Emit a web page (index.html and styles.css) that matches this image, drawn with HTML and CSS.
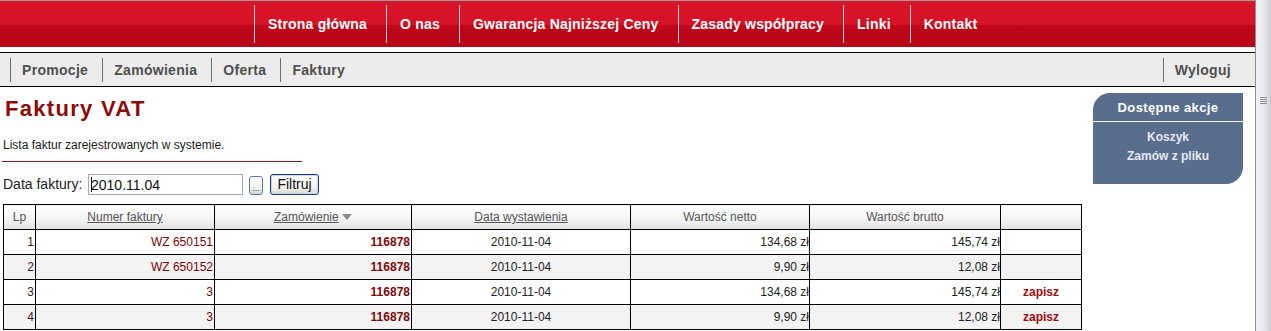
FILE: index.html
```html
<!DOCTYPE html>
<html lang="pl">
<head>
<meta charset="utf-8">
<title>Faktury VAT</title>
<link rel="stylesheet" href="styles.css">
</head>
<body>
<div class="window">
  <div class="page">
    <header class="topbar">
      <nav class="mainnav">
        <a href="#">Strona główna</a>
        <a href="#">O nas</a>
        <a href="#">Gwarancja Najniższej Ceny</a>
        <a href="#">Zasady współpracy</a>
        <a href="#">Linki</a>
        <a href="#">Kontakt</a>
      </nav>
    </header>
    <nav class="subnav">
      <a href="#">Promocje</a>
      <a href="#">Zamówienia</a>
      <a href="#">Oferta</a>
      <a href="#">Faktury</a>
      <a href="#" class="logout">Wyloguj</a>
    </nav>
    <div class="main">
      <section class="content">
        <h1 class="title">Faktury VAT</h1>
        <p class="lead">Lista faktur zarejestrowanych w systemie.</p>
        <hr class="divider">
        <form class="filter">
          <label class="filter-label">Data faktury:</label>
          <span class="date-input"><span class="caret"></span>2010.11.04</span>
          <button type="button" class="pick-btn">...</button>
          <button type="button" class="xp-btn">Filtruj</button>
        </form>
        <table class="grid">
          <colgroup>
            <col class="c-lp"><col class="c-num"><col class="c-ord"><col class="c-date"><col class="c-net"><col class="c-gross"><col class="c-act">
          </colgroup>
          <thead>
            <tr>
              <th>Lp</th>
              <th><a href="#">Numer faktury</a></th>
              <th><a href="#">Zamówienie</a> <svg class="sort" width="10" height="6" viewBox="0 0 10 6"><path d="M0 0H10L5 6Z" fill="#8a8a8a"/></svg></th>
              <th><a href="#">Data wystawienia</a></th>
              <th>Wartość netto</th>
              <th>Wartość brutto</th>
              <th></th>
            </tr>
          </thead>
          <tbody>
            <tr>
              <td class="r lp">1</td><td class="r num">WZ 650151</td><td class="r ord">116878</td><td class="c">2010-11-04</td><td class="r money">134,68 zł</td><td class="r money">145,74 zł</td><td class="c"></td>
            </tr>
            <tr class="alt">
              <td class="r lp">2</td><td class="r num">WZ 650152</td><td class="r ord">116878</td><td class="c">2010-11-04</td><td class="r money">9,90 zł</td><td class="r money">12,08 zł</td><td class="c"></td>
            </tr>
            <tr>
              <td class="r lp">3</td><td class="r num">3</td><td class="r ord">116878</td><td class="c">2010-11-04</td><td class="r money">134,68 zł</td><td class="r money">145,74 zł</td><td class="c"><a href="#" class="save">zapisz</a></td>
            </tr>
            <tr class="alt">
              <td class="r lp">4</td><td class="r num">3</td><td class="r ord">116878</td><td class="c">2010-11-04</td><td class="r money">9,90 zł</td><td class="r money">12,08 zł</td><td class="c"><a href="#" class="save">zapisz</a></td>
            </tr>
          </tbody>
        </table>
      </section>
      <aside class="actions">
        <div class="actions-head">Dostępne akcje</div>
        <div class="actions-body">
          <a href="#">Koszyk</a>
          <a href="#">Zamów z pliku</a>
        </div>
      </aside>
    </div>
  </div>
  <div class="scrollbar"><div class="grip"></div></div>
</div>
</body>
</html>
```
FILE: styles.css
```css
html, body {
  margin: 0;
  padding: 0;
  height: 100%;
  overflow: hidden;
  background: #fff;
  font-family: "Liberation Sans", Arial, sans-serif;
}

.window {
  display: flex;
  height: 100%;
}

.page {
  width: 1255px;
  flex: none;
}

/* ---- top red bar ---- */
.topbar {
  height: 46px;
  border-top: 1px solid #9c9c9c;
  background: linear-gradient(#da1429 0, #d51227 52%, #bf0619 53%, #b90518 100%);
  margin-bottom: 5px;
}

.mainnav {
  display: flex;
  padding-left: 254px;
  padding-top: 4px;
}

.mainnav a {
  height: 38px;
  line-height: 38px;
  border-left: 1px solid #f4d6d9;
  padding: 0 19px 0 13px;
  color: #fff;
  font-weight: bold;
  font-size: 14px;
  letter-spacing: 0.2px;
  text-decoration: none;
}

.mainnav a:last-child {
  padding-right: 0;
}

/* ---- secondary bar ---- */
.subnav {
  display: flex;
  height: 33px;
  border-top: 1px solid #000;
  border-bottom: 1px solid #000;
  background: #ececec;
  padding-left: 10px;
  align-items: center;
}

.subnav a {
  height: 24px;
  line-height: 24px;
  border-left: 1px solid #6e6e6e;
  padding: 0 14px 0 11px;
  color: #505050;
  font-weight: bold;
  font-size: 14px;
  letter-spacing: 0.3px;
  text-decoration: none;
}

.subnav a.logout {
  margin-left: auto;
  padding: 0 24px 0 11px;
}

/* ---- main area ---- */
.main {
  display: flex;
  align-items: flex-start;
}

.content {
  width: 1078px;
  padding-left: 3px;
  flex: none;
}

.title {
  margin: 9px 0 0 2px;
  font-size: 22px;
  line-height: 26px;
  letter-spacing: 1.3px;
  color: #8c0b0b;
  font-weight: bold;
}

.lead {
  margin: 16px 0 0 0;
  font-size: 12px;
  line-height: 15px;
  color: #1a1a1a;
}

.divider {
  width: 300px;
  margin: 8px 0 0 -1px;
  border: 0;
  border-top: 1px solid #8b1a1a;
  height: 0;
}

.filter {
  display: flex;
  align-items: center;
  height: 22px;
  margin-top: 11px;
}

.filter-label {
  font-size: 14px;
  color: #222;
  width: 85px;
}

.date-input {
  box-sizing: border-box;
  width: 155px;
  height: 21px;
  margin-top: 1px;
  border: 1px solid #a3a8ad;
  display: flex;
  align-items: center;
  padding-left: 2px;
  font-size: 14px;
  color: #111;
  background: #fff;
}

.caret {
  width: 1px;
  height: 15px;
  background: #000;
  margin-right: -1px;
}

.pick-btn {
  box-sizing: border-box;
  width: 14px;
  height: 19px;
  margin: 3px 0 0 6px;
  padding: 0;
  border: 1px solid #5b7ba6;
  border-radius: 3px;
  background: linear-gradient(#ffffff, #f1f0ec 60%, #d9d6cc);
  font-family: "Liberation Sans", Arial, sans-serif;
  font-size: 9px;
  line-height: 22px;
  color: #24427c;
  overflow: hidden;
}

.xp-btn {
  box-sizing: border-box;
  width: 49px;
  height: 21px;
  margin: 0 0 0 7px;
  padding: 0;
  border: 1px solid #1d3f79;
  border-radius: 3px;
  background: linear-gradient(#fefefe, #f3f2ec 65%, #dcd8cb);
  box-shadow: inset 0 0 0 1px #c7d8f3;
  font-family: "Liberation Sans", Arial, sans-serif;
  font-size: 14px;
  line-height: 17px;
  color: #111;
}

/* ---- table ---- */
.grid {
  margin-top: 9px;
  border-collapse: collapse;
  table-layout: fixed;
  width: 1078px;
  font-size: 12px;
  color: #222;
}

.c-lp { width: 32px; }
.c-num { width: 179px; }
.c-ord { width: 197px; }
.c-date { width: 219px; }
.c-net { width: 179px; }
.c-gross { width: 191px; }
.c-act { width: 81px; }

.grid th,
.grid td {
  border: 1px solid #000;
  height: 24px;
  padding: 0 1px;
  white-space: nowrap;
  overflow: hidden;
}

.grid th {
  background: linear-gradient(#ffffff, #f4f4f4 55%, #e3e3e3);
  font-weight: normal;
  color: #555;
  text-align: center;
}

.grid th a {
  color: #555;
  text-decoration: underline;
}

.sort {
  vertical-align: 1px;
}

.grid tr.alt td {
  background: #f3f3f3;
}

.grid td.r { text-align: right; }
.grid td.c { text-align: center; }

.grid td.lp {
  color: #3a1a1a;
}

.grid td.num {
  color: #780606;
}

.grid td.ord {
  color: #7d0a0a;
  font-weight: bold;
}

.grid td.money {
  padding-right: 0;
}

.save {
  color: #a00d0d;
  font-weight: bold;
  text-decoration: none;
}

/* ---- side panel ---- */
.actions {
  width: 150px;
  margin: 6px 0 0 12px;
  background: #596d8d;
  border-radius: 17px 0 17px 0;
  overflow: hidden;
  flex: none;
}

.actions-head {
  height: 28px;
  line-height: 29px;
  border-bottom: 1px solid #f2f4f8;
  text-align: center;
  color: #fff;
  font-size: 13px;
  font-weight: bold;
  letter-spacing: 0.4px;
}

.actions-body {
  height: 62px;
  box-sizing: border-box;
  padding-top: 6px;
  display: flex;
  flex-direction: column;
  align-items: center;
}

.actions-body a {
  color: #e6e9f1;
  font-size: 12px;
  font-weight: bold;
  line-height: 19px;
  text-decoration: none;
}

/* ---- fake XP scrollbar ---- */
.scrollbar {
  width: 15px;
  flex: none;
  height: 100%;
  border-left: 1px solid #8e8e96;
  background: linear-gradient(to right, #f4f4f8 0, #ececf2 40%, #dedee8 75%, #cacad6 100%);
}

.grip {
  width: 7px;
  height: 7px;
  margin: 97px 0 0 4px;
  background: repeating-linear-gradient(#8f8f9e 0 1px, transparent 1px 2px);
}
```
